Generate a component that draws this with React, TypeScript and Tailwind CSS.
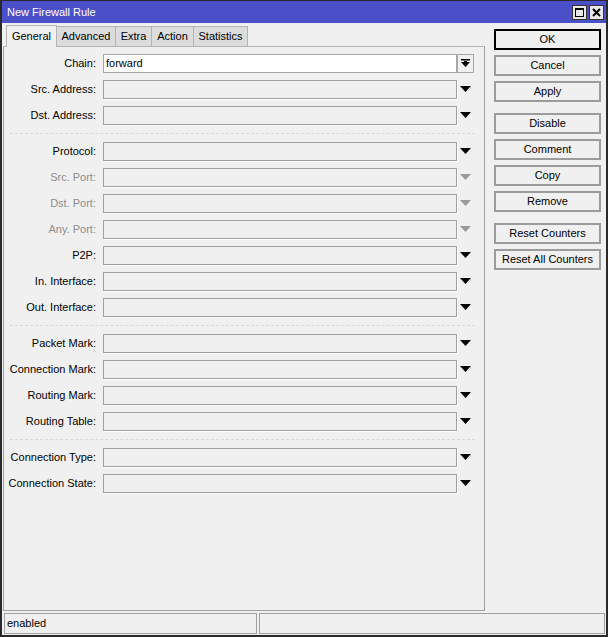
import React from "react";

const font = { fontFamily: '"Liberation Sans", Arial, sans-serif' };

function Arrow({ disabled }: { disabled?: boolean }) {
  return (
    <div className="w-[17px] h-[19px] flex items-center justify-center">
      <svg width="11" height="6" viewBox="0 0 11 6">
        <polygon points="0,0 11,0 5.5,6" fill={disabled ? "#9a9a9a" : "#000"} />
      </svg>
    </div>
  );
}

function Row({
  label,
  value,
  disabled,
  chain,
}: {
  label: string;
  value?: string;
  disabled?: boolean;
  chain?: boolean;
}) {
  return (
    <div className="h-[26px] flex items-center">
      <div
        className={`w-[93px] text-right pr-[1px] whitespace-nowrap ${disabled ? "text-[#8d8d8d]" : "text-black"}`}
      >
        {label}:
      </div>
      <div
        className={`ml-[6px] w-[354px] h-[19px] border flex items-center px-[2px] ${
          chain
            ? "bg-white border-[#a6a6a6]"
            : "bg-[#f0f0f0] border-[#a0a0a0] shadow-[1px_1px_0_#ffffff]"
        }`}
      >
        {value}
      </div>
      {chain ? (
        <div className="w-[17px] h-[19px] border border-[#a6a6a6] flex items-center justify-center">
          <svg width="9" height="9" viewBox="0 0 9 9">
            <rect x="0" y="0" width="9" height="1.5" fill="#000" />
            <polygon points="0,3 9,3 4.5,8" fill="#000" />
            <rect x="3" y="2" width="3" height="2" fill="#000" />
          </svg>
        </div>
      ) : (
        <Arrow disabled={disabled} />
      )}
    </div>
  );
}

function Sep() {
  return (
    <div className="h-[10px] flex items-center pl-[6px] pr-[9px]">
      <div className="w-full border-t border-dashed border-[#d8d8d8]" />
    </div>
  );
}

function Btn({ children, ok }: { children: React.ReactNode; ok?: boolean }) {
  return (
    <div
      className={`w-[107px] h-[21px] flex items-center justify-center bg-[#f0f0f0] whitespace-nowrap ${
        ok ? "border-2 border-black" : "border-2 border-[#9c9c9c]"
      }`}
    >
      {children}
    </div>
  );
}

export default function App() {
  return (
    <div
      className="w-[608px] h-[637px] bg-[#f0f0f0] border-l-2 border-r-2 border-b-2 border-t border-[#2a2a2a] flex flex-col text-[11px] text-black overflow-hidden"
      style={font}
    >
      {/* Title bar */}
      <div className="h-[22px] bg-[#4c50c8] flex items-center justify-between pl-[5px] pr-[2px] shrink-0">
        <span className="text-white text-[11px]">New Firewall Rule</span>
        <div className="flex gap-[2px]">
          <div className="w-[15px] h-[15px] bg-[#e8e8e8] border border-[#333] flex items-center justify-center">
            <div className="w-[9px] h-[9px] border border-black border-t-2" />
          </div>
          <div className="w-[15px] h-[15px] bg-[#e8e8e8] border border-[#333] flex items-center justify-center">
            <svg width="9" height="9" viewBox="0 0 9 9">
              <path d="M1 1 L8 8 M8 1 L1 8" stroke="#000" strokeWidth="2" />
            </svg>
          </div>
        </div>
      </div>

      <div className="flex flex-1 min-h-0">
        {/* Left */}
        <div className="flex flex-col ml-[1px] w-[482px]">
          {/* Tabs */}
          <div className="h-[23px] flex items-end pl-[3px] pt-[2px] shrink-0">
            <div className="w-[51px] h-[22px] flex items-center justify-center bg-[#f0f0f0] border-t border-l border-r border-[#b4b4b4] relative top-[1px] z-10">
              General
            </div>
            <div className="w-[59px] h-[20px] flex items-center justify-center bg-[#dcdcdc] border-t border-r border-[#b4b4b4]">
              Advanced
            </div>
            <div className="w-[36px] h-[20px] flex items-center justify-center bg-[#dcdcdc] border-t border-r border-[#b4b4b4]">
              Extra
            </div>
            <div className="w-[42px] h-[20px] flex items-center justify-center bg-[#dcdcdc] border-t border-r border-[#b4b4b4]">
              Action
            </div>
            <div className="w-[54px] h-[20px] flex items-center justify-center bg-[#dcdcdc] border-t border-r border-[#b4b4b4]">
              Statistics
            </div>
          </div>
          {/* Panel */}
          <div className="flex-1 border border-[#a0a0a0] border-t-[#b4b4b4] pt-[3px]">
            <Row label="Chain" value="forward" chain />
            <Row label="Src. Address" />
            <Row label="Dst. Address" />
            <Sep />
            <Row label="Protocol" />
            <Row label="Src. Port" disabled />
            <Row label="Dst. Port" disabled />
            <Row label="Any. Port" disabled />
            <Row label="P2P" />
            <Row label="In. Interface" />
            <Row label="Out. Interface" />
            <Sep />
            <Row label="Packet Mark" />
            <Row label="Connection Mark" />
            <Row label="Routing Mark" />
            <Row label="Routing Table" />
            <Sep />
            <Row label="Connection Type" />
            <Row label="Connection State" />
          </div>
        </div>

        {/* Right buttons */}
        <div className="flex flex-col pl-[9px] pt-[6px]">
          <div className="flex flex-col gap-[5px]">
            <Btn ok>OK</Btn>
            <Btn>Cancel</Btn>
            <Btn>Apply</Btn>
          </div>
          <div className="flex flex-col gap-[5px] mt-[11px]">
            <Btn>Disable</Btn>
            <Btn>Comment</Btn>
            <Btn>Copy</Btn>
            <Btn>Remove</Btn>
          </div>
          <div className="flex flex-col gap-[5px] mt-[11px]">
            <Btn>Reset Counters</Btn>
            <Btn>Reset All Counters</Btn>
          </div>
        </div>
      </div>

      {/* Status bar */}
      <div className="h-[24px] flex gap-[2px] pl-[2px] pr-[1px] pt-[2px] pb-[1px] shrink-0">
        <div className="w-[253px] border border-[#a0a0a0] flex items-center pl-[2px]">enabled</div>
        <div className="flex-1 border border-[#a0a0a0]" />
      </div>
    </div>
  );
}
